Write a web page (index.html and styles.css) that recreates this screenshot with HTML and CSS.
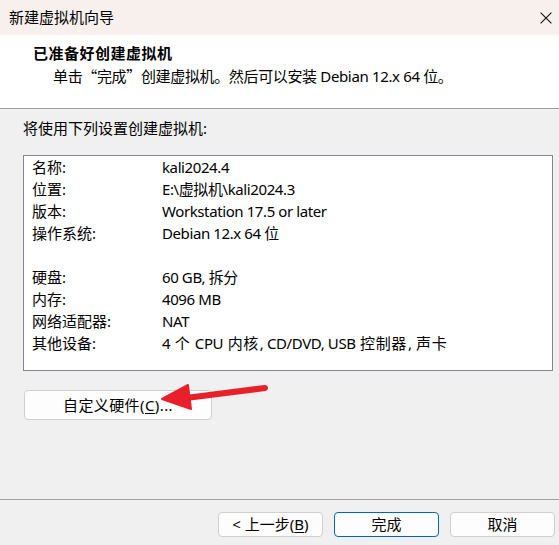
FILE: index.html
```html
<!DOCTYPE html>
<html lang="zh-CN">
<head>
<meta charset="utf-8">
<title>新建虚拟机向导</title>
<link rel="stylesheet" href="styles.css">
</head>
<body>
<div class="window">
  <div class="titlebar">
    <span class="title">新建虚拟机向导</span>
    <svg class="close" width="12" height="12" viewBox="0 0 12 12"><path d="M0.6 0.6L11.4 11.4M11.4 0.6L0.6 11.4" stroke="#1a1a1a" stroke-width="1.2" fill="none"/></svg>
  </div>
  <div class="header">
    <div class="h-title">已准备好创建虚拟机</div>
    <div class="h-sub">单击<span class="q">“</span>完成<span class="q">”</span>创建虚拟机。然后可以安装 Debian 12.x 64 位。</div>
  </div>
  <div class="body">
    <div class="intro">将使用下列设置创建虚拟机:</div>
    <div class="summary">
      <div class="row"><span class="k">名称:</span><span class="v">kali2024.4</span></div>
      <div class="row"><span class="k">位置:</span><span class="v">E:\虚拟机\kali2024.3</span></div>
      <div class="row"><span class="k">版本:</span><span class="v">Workstation 17.5 or later</span></div>
      <div class="row"><span class="k">操作系统:</span><span class="v">Debian 12.x 64 位</span></div>
      <div class="row blank"></div>
      <div class="row"><span class="k">硬盘:</span><span class="v">60 GB, 拆分</span></div>
      <div class="row"><span class="k">内存:</span><span class="v">4096 MB</span></div>
      <div class="row"><span class="k">网络适配器:</span><span class="v">NAT</span></div>
      <div class="row"><span class="k">其他设备:</span><span class="v">4 <span class="cj">个</span> CPU <span class="cj">内核</span>, CD/DVD, USB <span class="cj">控制器</span>, <span class="cj">声卡</span></span></div>
    </div>
    <div class="custom-wrap">
      <button class="btn custom">自定义硬件(<u>C</u>)...</button>
    </div>
  </div>
  <div class="footer">
    <button class="btn">&lt; 上一步(<u>B</u>)</button>
    <button class="btn primary">完成</button>
    <button class="btn">取消</button>
  </div>
  <svg class="arrow" width="559" height="545" viewBox="0 0 559 545">
    <path d="M265 388 L186 398" stroke="#e8202a" stroke-width="6" stroke-linecap="round" fill="none"/>
    <path d="M162 399 L188 385 L191 409 Z" fill="#e8202a" stroke="#e8202a" stroke-width="2" stroke-linejoin="round"/>
  </svg>
</div>
</body>
</html>
```
FILE: styles.css
```css
* { box-sizing: border-box; }
html, body { margin: 0; padding: 0; }
body {
  width: 559px;
  height: 545px;
  overflow: hidden;
  font-family: "Segoe UI", "Noto Sans", "Noto Sans CJK SC", sans-serif;
  font-size: 15px;
  color: #000;
  background: #f0f0f0;
}
.window {
  position: relative;
  width: 559px;
  height: 545px;
  display: flex;
  flex-direction: column;
}
.titlebar {
  height: 35px;
  background: #f8f0ec;
  display: flex;
  align-items: center;
  justify-content: space-between;
  padding: 0 7px 0 9px;
}
.title { line-height: 1; }
.header {
  height: 74px;
  background: #fff;
  border-bottom: 1px solid #a0a0a0;
  padding: 7px 0 0 33px;
}
.h-title { font-weight: bold; line-height: 22px; letter-spacing: 0.5px; }
.h-sub { padding-left: 20px; line-height: 24px; letter-spacing: -0.35px; }
.q { font-family: "Noto Sans CJK SC", sans-serif; }
.body {
  flex: 1;
  padding: 7px 7px 0 23px;
  border-bottom: 1px solid #a0a0a0;
}
.intro { line-height: 24px; }
.summary {
  margin-top: 15px;
  width: 530px;
  height: 216px;
  background: #fff;
  border: 1px solid #828790;
  padding: 0 0 0 8px;
}
.row { display: flex; height: 22px; line-height: 22px; }
.k { width: 130px; }
.v { letter-spacing: -0.4px; }
.cj { letter-spacing: 0.6px; padding: 0 1px; }
.custom-wrap { margin-top: 19px; }
.btn {
  font-family: inherit;
  font-size: 15px;
  color: #000;
  background: #fdfdfd;
  border: 1px solid #d0d0d0;
  border-radius: 4px;
  height: 25px;
  padding: 0;
  line-height: 1;
}
.custom { width: 188px; height: 30px; margin-left: 1px; letter-spacing: 0.4px; }
.footer {
  height: 45px;
  display: flex;
  justify-content: flex-end;
  align-items: flex-start;
  gap: 11px;
  padding: 12px 4px 0 0;
}
.footer .btn { width: 105px; }
.primary { border-color: #0067c0; }
u { text-underline-offset: 2px; }
.arrow { position: absolute; left: 0; top: 0; pointer-events: none; }
```
